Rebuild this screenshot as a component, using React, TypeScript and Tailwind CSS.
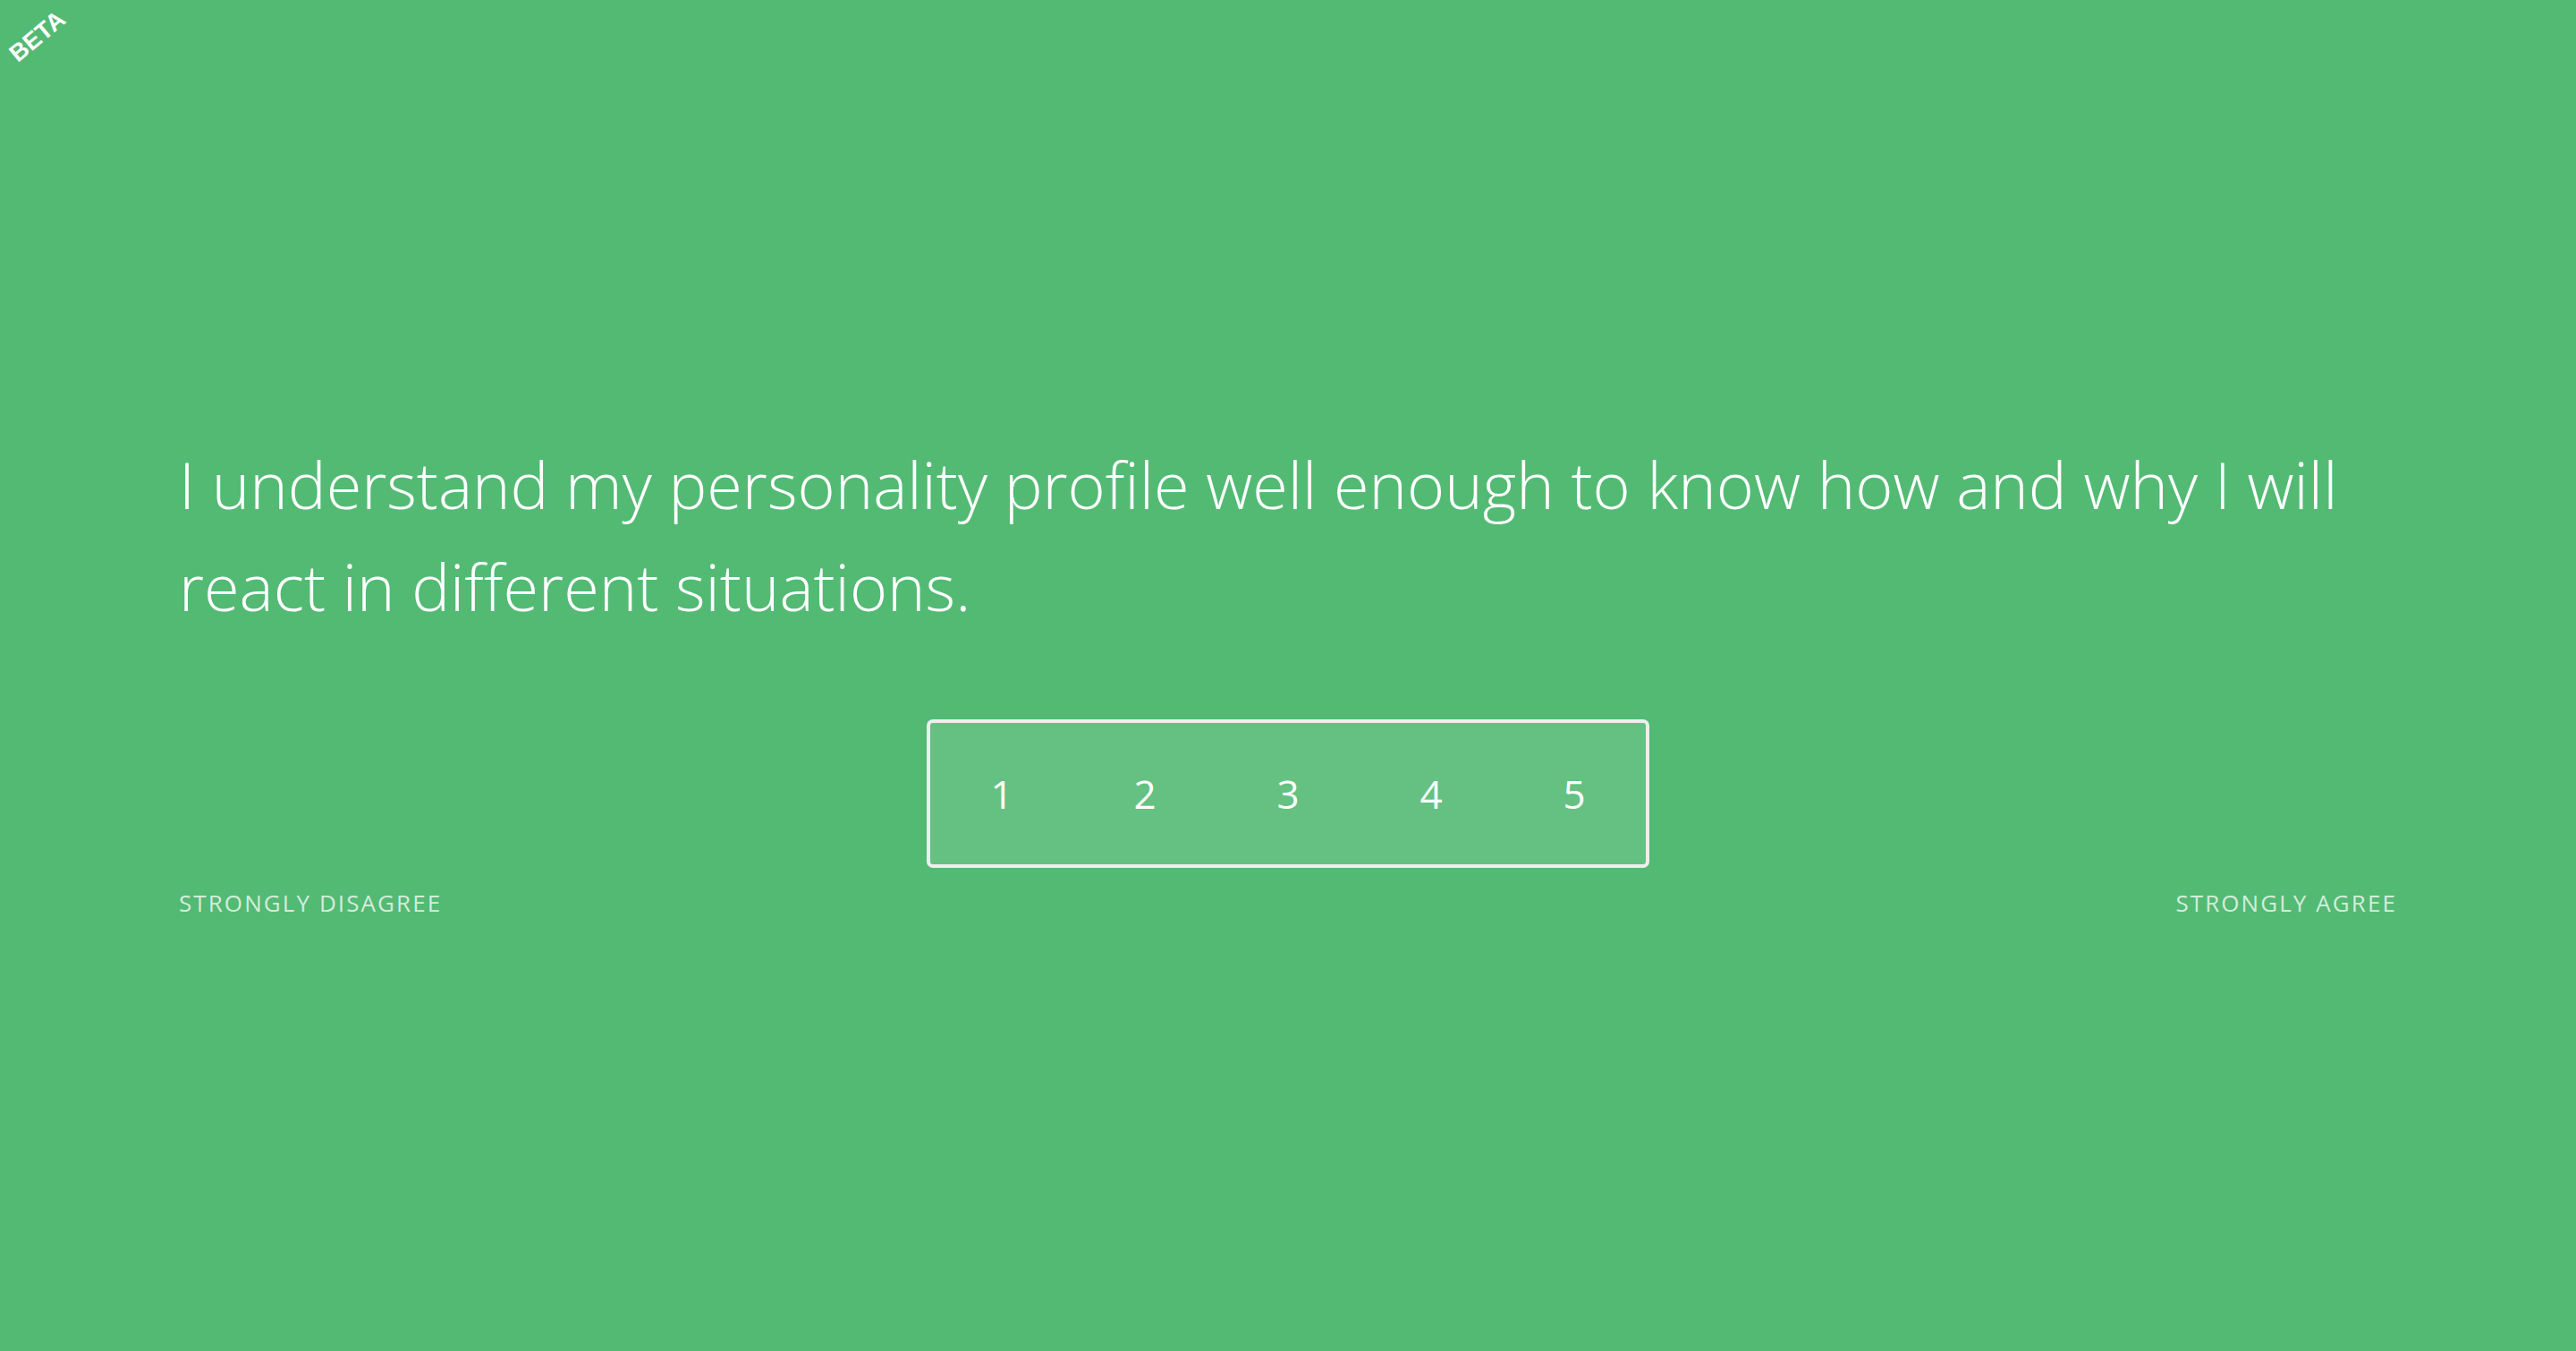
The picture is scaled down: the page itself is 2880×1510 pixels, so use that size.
import React, { useState } from 'react';

const SCALE = [1, 2, 3, 4, 5];

const BetaBadge: React.FC = () => (
  <div className="absolute left-[42px] top-[41px] -translate-x-1/2 -translate-y-1/2 -rotate-[40deg] select-none font-['Liberation_Sans',Arial,sans-serif] text-[27px] font-bold leading-none text-white">
    BETA
  </div>
);

export default function App() {
  const [picked, setPicked] = useState<number | null>(null);

  return (
    <div className="relative h-[1510px] w-full overflow-hidden bg-[#53ba74] font-['Open_Sans',sans-serif] text-white">
      <BetaBadge />

      <div className="px-[200px] pt-[484px]">
        <h1 className="text-[72px] font-light leading-[114px]">
          I understand my personality profile well enough to know how and why I will react in different situations.
        </h1>

        <div className="mt-[92px] flex justify-center">
          <div className="flex h-[166px] rounded-[7px] border-4 border-[#eeeeee] bg-white/10">
            {SCALE.map((n) => (
              <button
                key={n}
                onClick={() => setPicked(n)}
                className={`flex w-[160px] items-center justify-center text-[44px] font-normal text-white ${picked === n ? 'bg-white/20' : ''}`}
              >
                {n}
              </button>
            ))}
          </div>
        </div>

        <div className="mt-[20px] flex justify-between text-[26px] uppercase leading-[1.5] tracking-[0.08em] text-white/75">
          <span>Strongly disagree</span>
          <span>Strongly agree</span>
        </div>
      </div>
    </div>
  );
}
